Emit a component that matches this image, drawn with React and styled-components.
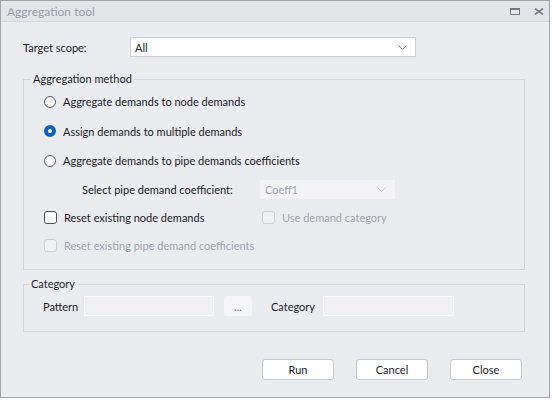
import React from 'react'
import styled, { createGlobalStyle } from 'styled-components'

const Global = createGlobalStyle`
  html, body { margin: 0; padding: 0; background: #ffffff; }
  body { font-family: Lato, "Noto Sans", sans-serif; font-size: 11px; color: #1c1c28; }
`

const Window = styled.div`
  width: 548px;
  height: 396px;
  border: 1px solid #a2a3ab;
  background: #ebecf0;
  display: flex;
  flex-direction: column;
`

const TitleBar = styled.div`
  height: 20px;
  background: #e4e5e9;
  border-bottom: 1px solid #d6d7dc;
  display: flex;
  align-items: center;
  padding-left: 6px;
  padding-right: 5px;
  color: #9a9bab;
  font-size: 12px;
`

const TitleText = styled.span`
  flex: 1;
`

const TitleIcons = styled.div`
  display: flex;
  gap: 14px;
  align-items: center;
`

const Body = styled.div`
  flex: 1;
  display: flex;
  flex-direction: column;
  padding: 15px 24px 0 22px;
`

const Row = styled.div`
  display: flex;
  align-items: center;
  height: ${p => p.$h || 29}px;
  padding-left: ${p => p.$indent || 0}px;
`

const Label = styled.span`
  width: ${p => (p.$w ? p.$w + 'px' : 'auto')};
  flex: none;
  color: ${p => (p.$disabled ? '#a3a4ad' : '#1c1c28')};
  white-space: nowrap;
`

const Combo = styled.div`
  width: ${p => p.$w}px;
  height: ${p => p.$hgt || 20}px;
  box-sizing: border-box;
  background: ${p => (p.$disabled ? '#f4f4f6' : '#ffffff')};
  border: 1px solid ${p => (p.$disabled ? '#f4f4f6' : '#cfd0d6')};
  display: flex;
  align-items: center;
  justify-content: space-between;
  padding: 0 8px 0 4px;
  color: ${p => (p.$disabled ? '#a3a4ad' : '#1c1c28')};
`

const Group = styled.fieldset`
  margin: ${p => p.$mt || 0}px 0 0 0;
  padding: ${p => p.$pad};
  border: 1px solid #d5d6db;
  min-width: 0;
  height: ${p => p.$h}px;
  box-sizing: border-box;
`

const Legend = styled.legend`
  padding: 0 2px;
  margin-left: ${p => p.$ml}px;
  line-height: 16px;
  color: #1c1c28;
`

const Radio = styled.span`
  width: 12px;
  height: 12px;
  box-sizing: border-box;
  border-radius: 50%;
  border: ${p => (p.$checked ? '4px solid #0b63be' : '1px solid #5a5a64')};
  background: #ffffff;
  margin-right: 7px;
  flex: none;
`

const Check = styled.span`
  width: 13px;
  height: 13px;
  box-sizing: border-box;
  border-radius: 3px;
  border: 1px solid ${p => (p.$disabled ? '#cdced4' : '#4f4f58')};
  background: ${p => (p.$disabled ? '#f2f2f4' : '#ffffff')};
  margin-right: 7px;
  flex: none;
`

const Option = styled.div`
  display: flex;
  align-items: center;
  width: ${p => (p.$w ? p.$w + 'px' : 'auto')};
  flex: none;
`

const TextInput = styled.div`
  width: ${p => p.$w}px;
  height: 20px;
  box-sizing: border-box;
  background: #f1f1f3;
  border: 1px solid #fafafb;
  flex: none;
`

const SmallButton = styled.div`
  width: 28px;
  height: 20px;
  box-sizing: border-box;
  background: #f6f6f8;
  border-radius: 3px;
  display: flex;
  align-items: center;
  justify-content: center;
  color: #6a6b75;
  margin: 0 19px 0 10px;
  flex: none;
`

const Footer = styled.div`
  display: flex;
  justify-content: flex-end;
  gap: 22px;
  margin-top: 27px;
  padding-right: 3px;
`

const Button = styled.button`
  width: 72px;
  height: 21px;
  box-sizing: border-box;
  background: #ffffff;
  border: 1px solid #c9cad0;
  border-radius: 3px;
  font-family: inherit;
  font-size: 11px;
  color: #1c1c28;
  padding: 0;
`

const Chevron = ({ color }) => (
  <svg width="9" height="5" viewBox="0 0 9 5">
    <path d="M0.5 0.5 L4.5 4.5 L8.5 0.5" fill="none" stroke={color} strokeWidth="1" />
  </svg>
)

const MaxIcon = () => (
  <svg width="10" height="7" viewBox="0 0 10 7">
    <rect x="0.5" y="1" width="9" height="5.5" fill="none" stroke="#777884" strokeWidth="1" />
    <rect x="0" y="0" width="10" height="2" fill="#777884" />
  </svg>
)

const CloseIcon = () => (
  <svg width="10" height="7" viewBox="0 0 10 7">
    <path d="M1 0.5 L9 6.5 M9 0.5 L1 6.5" stroke="#777884" strokeWidth="1.6" />
  </svg>
)

export default function App() {
  return (
    <>
      <Global />
      <Window>
        <TitleBar>
          <TitleText>Aggregation tool</TitleText>
          <TitleIcons>
            <MaxIcon />
            <CloseIcon />
          </TitleIcons>
        </TitleBar>
        <Body>
          <Row $h={20}>
            <Label $w={107}>Target scope:</Label>
            <Combo $w={286}>
              <span>All</span>
              <Chevron color="#8a8a98" />
            </Combo>
          </Row>

          <Group $mt={14} $h={199} $pad="0 0 0 20px">
            <Legend $ml={-13}>Aggregation method</Legend>
            <Row $h={29}>
              <Option><Radio />Aggregate demands to node demands</Option>
            </Row>
            <Row $h={30}>
              <Option><Radio $checked />Assign demands to multiple demands</Option>
            </Row>
            <Row $h={29}>
              <Option><Radio />Aggregate demands to pipe demands coefficients</Option>
            </Row>
            <Row $h={28} $indent={38}>
              <Label $w={178}>Select pipe demand coefficient:</Label>
              <Combo $w={135} $hgt={19} $disabled>
                <span>Coeff1</span>
                <Chevron color="#c6c7ce" />
              </Combo>
            </Row>
            <Row $h={28}>
              <Option $w={218}><Check />Reset existing node demands</Option>
              <Option><Check $disabled /><Label $disabled>Use demand category</Label></Option>
            </Row>
            <Row $h={29}>
              <Option><Check $disabled /><Label $disabled>Reset existing pipe demand coefficients</Label></Option>
            </Row>
          </Group>

          <Group $mt={6} $h={56} $pad="4px 0 0 19px">
            <Legend $ml={-14}>Category</Legend>
            <Row $h={20}>
              <Label $w={41}>Pattern</Label>
              <TextInput $w={130} />
              <SmallButton>...</SmallButton>
              <Label $w={52}>Category</Label>
              <TextInput $w={131} />
            </Row>
          </Group>

          <Footer>
            <Button>Run</Button>
            <Button>Cancel</Button>
            <Button>Close</Button>
          </Footer>
        </Body>
      </Window>
    </>
  )
}
